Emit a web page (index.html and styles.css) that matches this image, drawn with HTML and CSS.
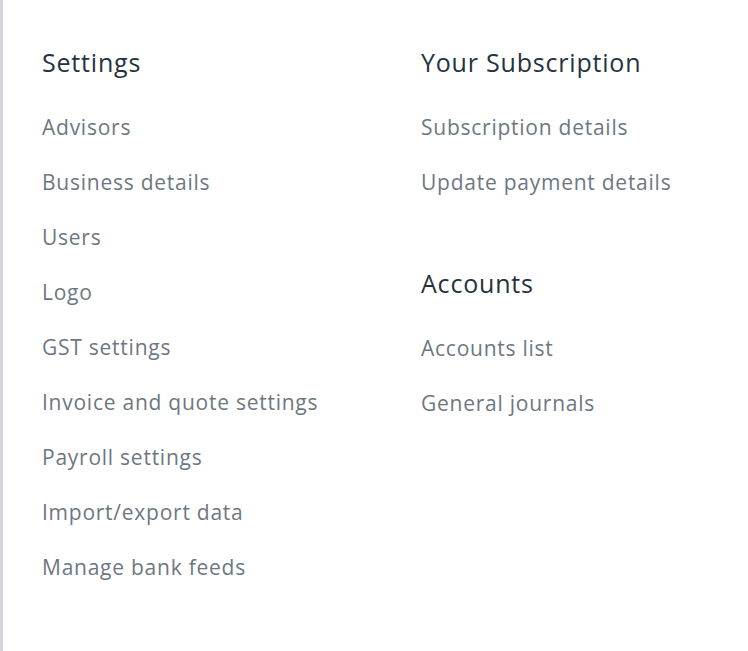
FILE: index.html
```html
<!DOCTYPE html>
<html lang="en">
<head>
    <meta charset="UTF-8">
    <title>Settings</title>
    <link rel="stylesheet" href="styles.css">
</head>
<body>
    <div class="panel">
        <div class="column left">
            <div class="section">
                <h2>Settings</h2>
                <a href="#">Advisors</a>
                <a href="#">Business details</a>
                <a href="#">Users</a>
                <a href="#">Logo</a>
                <a href="#">GST settings</a>
                <a href="#">Invoice and quote settings</a>
                <a href="#">Payroll settings</a>
                <a href="#">Import/export data</a>
                <a href="#">Manage bank feeds</a>
            </div>
        </div>
        <div class="column right">
            <div class="section">
                <h2>Your Subscription</h2>
                <a href="#">Subscription details</a>
                <a href="#">Update payment details</a>
            </div>
            <div class="section">
                <h2>Accounts</h2>
                <a href="#">Accounts list</a>
                <a href="#">General journals</a>
            </div>
        </div>
    </div>
</body>
</html>
```

FILE: styles.css
```css
body {
    margin: 0;
    font-family: "Open Sans", Lato, sans-serif;
    background-color: #ffffff;
}

.panel {
    display: flex;
    height: 651px;
    box-sizing: border-box;
    padding: 44px 0 0 39px;
    border-left: 3px solid #d4d6da;
    overflow: hidden;
}

.column {
    display: flex;
    flex-direction: column;
    gap: 55px;
}

.left {
    width: 379px;
    flex-shrink: 0;
}

.right {
    flex: 1;
    min-width: 0;
}

.section {
    display: flex;
    flex-direction: column;
}

h2 {
    margin: 0 0 20px 0;
    font-size: 25px;
    font-weight: 500;
    line-height: 36px;
    letter-spacing: 0.8px;
    color: #26323e;
}

.section a {
    font-size: 21px;
    line-height: 55px;
    letter-spacing: 0.75px;
    color: #6d7782;
    text-decoration: none;
}
```
